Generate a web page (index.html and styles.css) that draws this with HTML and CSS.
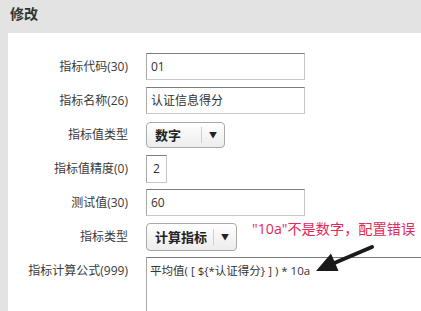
FILE: index.html
```html
<!DOCTYPE html>
<html>
<head>
<meta charset="utf-8">
<link rel="stylesheet" href="styles.css">
</head>
<body>
<div class="page">
  <div class="title">修改</div>
  <div class="panel">
    <div class="form">
      <div class="label">指标代码(30)</div>
      <div class="field"><div class="input w-long">01</div></div>
      <div class="label">指标名称(26)</div>
      <div class="field"><div class="input w-long">认证信息得分</div></div>
      <div class="label">指标值类型</div>
      <div class="field"><div class="select s1"><span class="sel-text">数字</span><span class="sel-arrow">▼</span></div></div>
      <div class="label">指标值精度(0)</div>
      <div class="field"><div class="input w-short">2</div></div>
      <div class="label">测试值(30)</div>
      <div class="field"><div class="input w-long">60</div></div>
      <div class="label">指标类型</div>
      <div class="field"><div class="select s2"><span class="sel-text">计算指标</span><span class="sel-arrow">▼</span></div></div>
      <div class="label">指标计算公式(999)</div>
      <div class="field"><div class="textarea">平均值( [ ${*认证得分} ] ) * 10a</div></div>
    </div>
  </div>
  <div class="note">"10a"不是数字，配置错误</div>
  <svg class="arrow" width="70" height="40" viewBox="0 0 70 40">
    <line x1="62" y1="7" x2="22" y2="24" stroke="#1a1a1a" stroke-width="4" stroke-linecap="round"/>
    <polygon points="6,31 28.5,31 21,13.5" fill="#1a1a1a"/>
  </svg>
</div>
</body>
</html>
```
FILE: styles.css
```css
* { box-sizing: border-box; }
html, body { margin: 0; padding: 0; }
body {
  width: 421px;
  height: 311px;
  overflow: hidden;
  background: #e3e3e3;
  font-family: "Open Sans", "Noto Sans CJK SC", sans-serif;
  color: #333;
}
.page { position: relative; height: 311px; }
.title {
  height: 33px;
  padding: 5px 0 0 10px;
  font-size: 14px;
  font-weight: bold;
  line-height: 18px;
  color: #2a3535;
}
.panel {
  margin-left: 8px;
  background: #fff;
  height: 278px;
  padding-top: 20px;
}
.form {
  display: grid;
  grid-template-columns: 120px 1fr;
  column-gap: 18px;
  row-gap: 7px;
  grid-auto-rows: 27px;
}
.label {
  text-align: right;
  font-size: 12px;
  line-height: 27px;
  color: #3a3a3a;
}
.field { display: flex; align-items: center; }
.input {
  height: 27px;
  border: 1px solid #c8c8c8;
  border-top-color: #7c7c7c;
  border-left-color: #a8a8a8;
  font-size: 12px;
  line-height: 25px;
  padding-left: 4px;
  color: #333;
}
.w-long { width: 159px; }
.w-short { width: 21px; height: 28px; padding-left: 0; text-align: center; }
.select {
  display: flex;
  align-items: center;
  height: 27px;
  border: 1px solid #a9a9a9;
  border-radius: 4px;
  background: linear-gradient(#ffffff, #ececec);
  font-size: 13px;
  font-weight: bold;
  color: #222;
}
.s1 { width: 79px; height: 26px; }
.s2 { width: 91px; height: 28px; }
.sel-text {
  flex: 1;
  padding-left: 8px;
  line-height: 16px;
  border-right: 1px solid #cfcfcf;
  height: 16px;
}
.sel-arrow {
  width: 22px;
  text-align: center;
  font-size: 8px;
  color: #222;
}
.textarea {
  align-self: start;
  width: 290px;
  height: 60px;
  border: 1px solid #c8c8c8;
  border-top-color: #7c7c7c;
  border-left-color: #a8a8a8;
  font-size: 11.5px;
  line-height: 22px;
  padding: 2px 0 0 3px;
  color: #333;
}
.note {
  position: absolute;
  left: 252px;
  top: 219px;
  font-size: 14.2px;
  line-height: 20px;
  color: #e5285a;
}
.arrow {
  position: absolute;
  left: 310px;
  top: 240px;
}
```
